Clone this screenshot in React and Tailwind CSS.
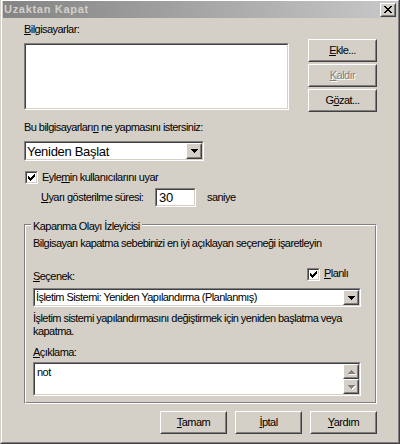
import React from "react";

function Raised({ className = "", innerClassName = "", children }) {
  return (
    <div className={`border border-t-white border-l-white border-r-[#404040] border-b-[#404040] ${className}`}>
      <div className={`w-full h-full border border-t-[#d4d0c8] border-l-[#d4d0c8] border-r-[#808080] border-b-[#808080] bg-[#d4d0c8] flex items-center justify-center ${innerClassName}`}>
        {children}
      </div>
    </div>
  );
}

function Sunken({ className = "", innerClassName = "", children }) {
  return (
    <div className={`border border-t-[#808080] border-l-[#808080] border-b-white border-r-white ${className}`}>
      <div className={`w-full h-full border border-t-[#404040] border-l-[#404040] border-b-[#d4d0c8] border-r-[#d4d0c8] bg-white ${innerClassName}`}>
        {children}
      </div>
    </div>
  );
}

function Check() {
  return (
    <Sunken className="w-[13px] h-[13px] shrink-0" innerClassName="flex items-center justify-center">
      <svg width="7" height="7" viewBox="0 0 7 7" shapeRendering="crispEdges">
        <path d="M0 2h1v3H0zM1 3h1v3H1zM2 4h1v3H2zM3 3h1v3H3zM4 2h1v3H4zM5 1h1v3H5zM6 0h1v3H6z" fill="#000" />
      </svg>
    </Sunken>
  );
}

function DownArrow({ color = "#000" }) {
  return (
    <svg width="7" height="4" viewBox="0 0 7 4" shapeRendering="crispEdges">
      <path d="M0 0h7v1H0zM1 1h5v1H1zM2 2h3v1H2zM3 3h1v1H3z" fill={color} />
    </svg>
  );
}

function UpArrow({ color = "#000" }) {
  return (
    <svg width="7" height="4" viewBox="0 0 7 4" shapeRendering="crispEdges">
      <path d="M3 0h1v1H3zM2 1h3v1H2zM1 2h5v1H1zM0 3h7v1H0z" fill={color} />
    </svg>
  );
}

function Combo({ className = "", text, textClass = "" }) {
  return (
    <Sunken className={className} innerClassName="flex">
      <div className={`flex-1 flex items-center whitespace-nowrap overflow-hidden ${textClass}`}>{text}</div>
      <Raised className="w-[16px] h-full shrink-0">
        <DownArrow />
      </Raised>
    </Sunken>
  );
}

export default function App() {
  return (
    <div className="w-[400px] h-[444px] bg-[#d4d0c8] text-black text-[11px] leading-[13px] tracking-[-0.55px] font-['Liberation_Sans',Arial,sans-serif] border-l border-r border-b border-l-[#d4d0c8] border-r-[#404040] border-b-[#404040] overflow-hidden">
      <div className="h-full border-l border-t border-r border-b border-l-white border-t-white border-r-[#808080] border-b-[#808080] pl-[1px] pr-[1px]">
        {/* Title bar */}
        <div className="h-[17px] bg-linear-to-r from-[#848484] to-[#c8c8c8] flex items-center justify-between pl-[1px] pr-[1px]">
          <span className="font-bold text-[11px] tracking-[0.7px] text-[#d4d0c8]">Uzaktan Kapat</span>
          <Raised className="w-[16px] h-[14px]">
            <svg width="8" height="7" viewBox="0 0 8 7" shapeRendering="crispEdges">
              <path d="M0 0h2v1H0zM6 0h2v1H6zM1 1h2v1H1zM5 1h2v1H5zM2 2h4v1H2zM3 3h2v1H3zM2 4h4v1H2zM1 5h2v1H1zM5 5h2v1H5zM0 6h2v1H0zM6 6h2v1H6z" fill="#000" />
            </svg>
          </Raised>
        </div>

        {/* Body */}
        <div className="pl-[21px] flex flex-col items-start">
          <div className="mt-[5px]"><u>B</u>ilgisayarlar:</div>

          <div className="mt-[3px] flex items-start">
            <Sunken className="mt-[4px] w-[265px] h-[67px]" />
            <div className="ml-[19px] flex flex-col gap-[2px]">
              <Raised className="w-[69px] h-[23px]"><span><u>E</u>kle...</span></Raised>
              <Raised className="w-[69px] h-[23px]">
                <span className="text-[#808080] [text-shadow:1px_1px_0_#ffffff]"><u>K</u>aldır</span>
              </Raised>
              <Raised className="w-[69px] h-[23px]"><span>G<u>ö</u>zat...</span></Raised>
            </div>
          </div>

          <div className="mt-[9px]">Bu bilgisayarları<u>n</u> ne yapmasını istersiniz:</div>

          <Combo className="mt-[7px] w-[180px] h-[20px]" text="Yeniden Başlat" textClass="pl-[1px] text-[13px] tracking-[-0.3px]" />

          <div className="mt-[10px] flex items-center pl-[1px]">
            <Check />
            <span className="ml-[4px]">Eyle<u>m</u>in kullanıcılarını uyar</span>
          </div>

          <div className="mt-[4px] flex items-center">
            <span className="ml-[17px] w-[114px]"><u>U</u>yarı gösterilme süresi:</span>
            <Sunken className="w-[41px] h-[19px]" innerClassName="flex items-center pl-[2px] text-[13px] tracking-[-0.3px]">30</Sunken>
            <span className="ml-[11px]">saniye</span>
          </div>

          {/* Group box */}
          <div className="mt-[17px] w-[353px] h-[180px] border border-t-[#808080] border-l-[#808080] border-b-white border-r-white">
            <div className="h-full border border-t-white border-l-white border-b-[#808080] border-r-[#808080] pl-[7px] flex flex-col items-start">
              <div className="-mt-[7px] -ml-[2px] px-[2px] bg-[#d4d0c8] h-[13px] overflow-hidden">
                <span className="block pt-[1px]">Kapanma Olayı İzleyicisi</span>
              </div>
              <div className="mt-[5px] whitespace-nowrap">Bilgisayarı kapatma sebebinizi en iyi açıklayan seçeneği işaretleyin</div>

              <div className="mt-[17px] flex items-start">
                <div className="w-[274px] mt-[3px]"><u>S</u>eçenek:</div>
                <div className="flex items-start">
                  <div className="mt-[1px]"><Check /></div>
                  <span className="ml-[4px]"><u>P</u>lanlı</span>
                </div>
              </div>

              <Combo className="mt-[5px] w-[328px] h-[19px]" text="İşletim Sistemi: Yeniden Yapılandırma (Planlanmış)" textClass="pl-[1px]" />

              <div className="mt-[5px] w-[328px]">
                İşletim sistemi yapılandırmasını değiştirmek için yeniden başlatma veya
                <br />
                kapatma.
              </div>

              <div className="mt-[8px]"><u>A</u>çıklama:</div>

              <Sunken className="mt-[3px] w-[328px] h-[34px]" innerClassName="flex">
                <div className="flex-1 pl-[2px] pt-[2px]">not</div>
                <div className="w-[16px] flex flex-col">
                  <Raised className="w-[16px] h-[15px]">
                    <div className="relative">
                      <div className="absolute left-[1px] top-[1px]"><UpArrow color="#ffffff" /></div>
                      <div className="relative"><UpArrow color="#808080" /></div>
                    </div>
                  </Raised>
                  <Raised className="w-[16px] h-[15px]">
                    <div className="relative">
                      <div className="absolute left-[1px] top-[1px]"><DownArrow color="#ffffff" /></div>
                      <div className="relative"><DownArrow color="#808080" /></div>
                    </div>
                  </Raised>
                </div>
              </Sunken>
            </div>
          </div>

          <div className="mt-[7px] ml-[136px] flex gap-[8px]">
            <Raised className="w-[67px] h-[23px]"><span><u>T</u>amam</span></Raised>
            <Raised className="w-[67px] h-[23px]"><span><u>İ</u>ptal</span></Raised>
            <Raised className="w-[67px] h-[23px]"><span><u>Y</u>ardım</span></Raised>
          </div>
        </div>
      </div>
    </div>
  );
}
